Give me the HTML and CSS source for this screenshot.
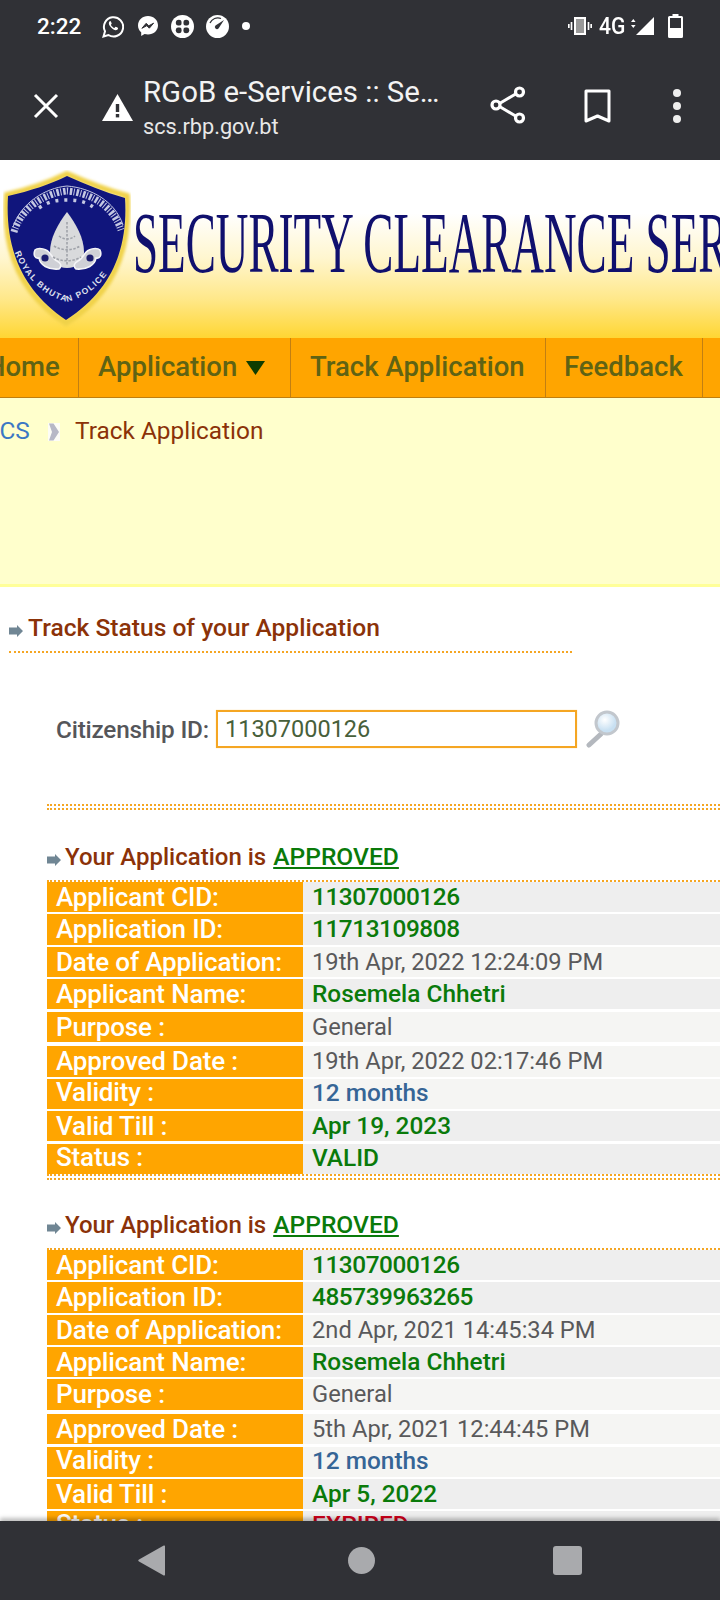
FILE: index.html
```html
<!DOCTYPE html>
<html lang="en">
<head>
<meta charset="utf-8">
<title>RGoB e-Services</title>
<link rel="stylesheet" href="styles.css">
</head>
<body>
<div class="phone">
  <header class="chrome">
    <div class="status">
      <span class="time">2:22</span>
      <svg class="ic wa" width="22" height="23" viewBox="0 0 22 23"><path d="M1.5 21.5l1.5-5.2A9.6 9.6 0 1 1 6.4 20z" fill="none" stroke="#fff" stroke-width="2"/><path d="M7.7 6.2c-1.2 1-1.2 2.800.2 4.900 1.500 2.300 3.500 3.900 5.700 4.100 1.200.1 2.400-.8 2.500-2 0-.3-2.200-1.500-2.500-1.400-.4.200-.8 1-1.200 1.100-.8.100-3.200-2-3.400-3-.1-.4.700-.9.700-1.300 0-.4-.9-2.500-1.300-2.600z" fill="#fff"/></svg>
      <svg class="ic ms" width="20" height="20" viewBox="0 0 20 20"><path d="M10 0C4.400 0 0 4 0 9.400c0 2.800 1.200 5.200 3.200 6.900V20l3.400-1.900c1.100.3 2.200.5 3.400.5 5.600 0 10-4 10-9.300C20 4 15.600 0 10 0z" fill="#fff"/><path d="M3.900 12.300l4.300-5 2.500 2.500 4.900-2.600-4.300 5-2.500-2.500z" fill="#303136" stroke="#303136"/></svg>
      <svg class="ic cl" width="23" height="23" viewBox="0 0 23 23"><circle cx="11.500" cy="11.500" r="11.500" fill="#fff"/><g fill="#303136"><ellipse cx="7.800" cy="7.800" rx="3" ry="3"/><ellipse cx="15.200" cy="7.800" rx="3" ry="3"/><ellipse cx="7.800" cy="15.200" rx="3" ry="3"/><ellipse cx="15.200" cy="15.200" rx="3" ry="3"/></g><path d="M11.500 4v15M4 11.500h15" stroke="#fff" stroke-width="1.600"/></svg>
      <svg class="ic ga" width="23" height="23" viewBox="0 0 23 23"><circle cx="11.500" cy="11.500" r="11.500" fill="#fff"/><path d="M4 8A8.500 8.500 0 0 1 15 3.500" fill="none" stroke="#303136" stroke-width="1.300"/><path d="M9.500 10.500L18 5l-5.500 8.500a2 2 0 0 1-3-3z" fill="#303136"/></svg>
      <span class="dot"></span>
      <span class="status-gap"></span>
      <svg class="ic vb" width="24" height="18" viewBox="0 0 24 18"><rect x="7" y="1" width="10" height="16" fill="#999" stroke="#fff" stroke-width="2"/><path d="M3.500 5v8M20.500 5v8M0.800 7v4M23.200 7v4" stroke="#fff" stroke-width="1.700"/></svg>
      <span class="net">4G</span>
      <svg class="ic sg" width="24" height="18" viewBox="0 0 24 18"><path d="M0 5l2.300-3 2.300 3zM0 8l2.300 3 2.300-3z" fill="#fff"/><path d="M23 0v18H5z" fill="#fff"/></svg>
      <svg class="ic bt" width="15" height="24" viewBox="0 0 15 24"><path d="M4.500 0h6v2h3a1.500 1.500 0 0 1 1.500 1.500v19A1.500 1.500 0 0 1 13.500 24h-12A1.500 1.500 0 0 1 0 22.500v-19A1.500 1.500 0 0 1 1.500 2h3z" fill="#fff"/><rect x="2" y="4" width="11" height="10" fill="#303136"/></svg>
    </div>
    <div class="toolbar">
      <svg class="ic close" width="26" height="26" viewBox="0 0 26 26"><path d="M2 2l22 22M24 2L2 24" stroke="#fff" stroke-width="3"/></svg>
      <svg class="ic warn" width="31" height="27" viewBox="0 0 31 27"><path d="M15.500 0L31 27H0z" fill="#fff"/><rect x="13.800" y="10" width="3.400" height="8" fill="#303136"/><rect x="13.800" y="20" width="3.400" height="3.400" fill="#303136"/></svg>
      <div class="page-title">
        <div class="t1">RGoB e-Services :: Se…</div>
        <div class="t2">scs.rbp.gov.bt</div>
      </div>
      <svg class="ic share" width="36" height="38" viewBox="0 0 36 38"><path d="M7 19L29 6M7 19l22 13" stroke="#fff" stroke-width="3"/><circle cx="6" cy="19" r="4" fill="#303136" stroke="#fff" stroke-width="3.200"/><circle cx="29.500" cy="6" r="4" fill="#303136" stroke="#fff" stroke-width="3.200"/><circle cx="29.500" cy="32" r="4" fill="#303136" stroke="#fff" stroke-width="3.200"/></svg>
      <svg class="ic mark" width="27" height="35" viewBox="0 0 27 35"><path d="M2 2h23v30L13.500 27 2 32z" fill="none" stroke="#fff" stroke-width="3" stroke-linejoin="round"/></svg>
      <div class="more"><span></span><span></span><span></span></div>
    </div>
  </header>

  <main class="page">
    <div class="banner">
      <svg class="crest" width="128" height="158" viewBox="0 0 128 158">
        <defs>
          <path id="arcBottom" d="M10 78C20 106 40 126 64 132C88 126 108 106 118 78"/>
          <filter id="soft" x="-10%" y="-10%" width="120%" height="120%"><feGaussianBlur stdDeviation="0.600"/></filter>
          <filter id="softer" x="-10%" y="-10%" width="120%" height="120%"><feGaussianBlur stdDeviation="1.600"/></filter>
        </defs>
        <path d="M4 25C26 20 48 12 64 4C82 12 102 20 124 26C127 76 113 122 63 153C15 122 0 76 4 25z" fill="none" stroke="#f0d24a" stroke-width="6" filter="url(#softer)"/>
        <path d="M5 26C27 21 48 14 64 6C82 14 101 22 122 28C125 76 111 119 63 150C17 119 2 76 5 26z" fill="#10157c"/>
        <g filter="url(#soft)" fill="none" stroke="#c4c8e2">
          <path d="M11 62C18 38 42 23 64 21C88 23 110 36 118 60" stroke-width="7" stroke-dasharray="2.500 1.400 1 1.800"/>
          <path d="M10 57C18 33 42 18 64 16C88 18 112 31 120 55" stroke-width="1"/>
          <path d="M36 38C46 31 54 30 64 30C74 30 84 31 94 40" stroke-width="3.500" stroke-dasharray="3 6"/>
        </g>
        <g filter="url(#soft)">
          <path d="M64 42C73 54 81 68 81 82C81 92 73 98 64 98C55 98 47 92 47 82C47 68 55 54 64 42z" fill="#d9dadc"/>
          <path d="M32 80c-2 5 0 9 4 8 1 7 9 12 20 11 3-3 2-6-2-8-5-2-6-9-11-11-4-2-9-2-11 0zM97 80c2 5 0 9-4 8-1 7-9 12-20 11-3-3-2-6 2-8 5-2 6-9 11-11 4-2 9-2 11 0z" fill="#cfd0d6" stroke="#f4f4f7" stroke-width="1.600"/>
          <circle cx="42" cy="88" r="3.600" fill="#1a1f6e"/><circle cx="87" cy="88" r="3.600" fill="#1a1f6e"/>
          <path d="M64 52v44M56 66c5 4 11 4 16 0M51 76c8 5 18 5 26 0M50 87c8 5 20 5 28 0" fill="none" stroke="#a0a3aa" stroke-width="1.600" stroke-dasharray="2.500 1.500"/>
        </g>
        <text class="crest-text"><textPath href="#arcBottom" startOffset="3%">ROYAL BHUTAN POLICE</textPath></text>
      </svg>
      <div class="brand"><span class="brand-text">SECURITY CLEARANCE SER</span></div>
    </div>

    <nav class="menu">
      <a class="menu-item home"><span class="home-text">Home</span></a>
      <a class="menu-item app">Application <svg class="caret" width="19" height="14" viewBox="0 0 19 14"><path d="M0 0h19L9.500 14z" fill="#0f3d00"/></svg></a>
      <a class="menu-item track">Track Application</a>
      <a class="menu-item fb">Feedback</a>
      <span class="menu-rest"></span>
    </nav>

    <div class="crumbs">
      <a class="crumb-root"><span class="crumb-clip">SCS</span></a>
      <svg class="crumb-sep" width="12" height="18" viewBox="0 0 12 18"><rect width="12" height="18" fill="#fdfdf6"/><path d="M1 0.500h4.500l5.500 8.500-5.500 8.500H1l3-8.500z" fill="#b7b8c6"/></svg>
      <span class="crumb-now">Track Application</span>
    </div>

    <section class="content">
      <h2 class="sec-head">
        <svg class="bullet" width="14" height="12" viewBox="0 0 14 12"><path d="M0 2.500h8V0l6 6-6 6V9.500H0z" fill="#708694"/></svg>
        <span>Track Status of your Application</span>
      </h2>
      <div class="sec-rule"></div>

      <form class="search">
        <label class="search-label">Citizenship ID:</label>
        <div class="search-input">11307000126</div>
        <svg class="lens" width="36" height="38" viewBox="0 0 36 38"><defs><radialGradient id="glass" cx="40%" cy="35%"><stop offset="0" stop-color="#fff"/><stop offset="1" stop-color="#c8e0f2"/></radialGradient></defs><path d="M15 24L3 35" stroke="#b4b8be" stroke-width="5" stroke-linecap="round"/><circle cx="21" cy="13" r="11" fill="url(#glass)" stroke="#c2c7cd" stroke-width="3"/></svg>
      </form>

      <div class="results">
        <div class="double-rule"></div>

        <h3 class="app-head">
          <svg class="bullet" width="14" height="12" viewBox="0 0 14 12"><path d="M0 2.500h8V0l6 6-6 6V9.500H0z" fill="#708694"/></svg>
          <span>Your Application is <a class="approved">APPROVED</a></span>
        </h3>
        <div class="record">
          <div class="row a"><div class="k">Applicant CID:</div><div class="v green num">11307000126</div></div>
          <div class="row a"><div class="k">Application ID:</div><div class="v green num">11713109808</div></div>
          <div class="row b"><div class="k">Date of Application:</div><div class="v plain">19th Apr, 2022 12:24:09 PM</div></div>
          <div class="row a"><div class="k">Applicant Name:</div><div class="v green">Rosemela Chhetri</div></div>
          <div class="row b tall"><div class="k">Purpose :</div><div class="v plain">General</div></div>
          <div class="row b"><div class="k">Approved Date :</div><div class="v plain">19th Apr, 2022 02:17:46 PM</div></div>
          <div class="row b up"><div class="k">Validity :</div><div class="v blue">12 months</div></div>
          <div class="row a"><div class="k">Valid Till :</div><div class="v green">Apr 19, 2023</div></div>
          <div class="row a last up"><div class="k">Status :</div><div class="v green">VALID</div></div>
        </div>
        <div class="double-rule end"></div>

        <h3 class="app-head second">
          <svg class="bullet" width="14" height="12" viewBox="0 0 14 12"><path d="M0 2.500h8V0l6 6-6 6V9.500H0z" fill="#708694"/></svg>
          <span>Your Application is <a class="approved">APPROVED</a></span>
        </h3>
        <div class="record">
          <div class="row a"><div class="k">Applicant CID:</div><div class="v green num">11307000126</div></div>
          <div class="row a"><div class="k">Application ID:</div><div class="v green num">485739963265</div></div>
          <div class="row b"><div class="k">Date of Application:</div><div class="v plain">2nd Apr, 2021 14:45:34 PM</div></div>
          <div class="row a"><div class="k">Applicant Name:</div><div class="v green">Rosemela Chhetri</div></div>
          <div class="row b tall"><div class="k">Purpose :</div><div class="v plain">General</div></div>
          <div class="row b"><div class="k">Approved Date :</div><div class="v plain">5th Apr, 2021 12:44:45 PM</div></div>
          <div class="row b up"><div class="k">Validity :</div><div class="v blue">12 months</div></div>
          <div class="row a"><div class="k">Valid Till :</div><div class="v green">Apr 5, 2022</div></div>
          <div class="row a last up"><div class="k">Status :</div><div class="v red">EXPIRED</div></div>
        </div>
      </div>
    </section>
  </main>

  <footer class="navbar">
    <svg width="27" height="31" viewBox="0 0 27 31" class="nb back"><path d="M27 1.500v28a1 1 0 0 1-1.700.8L1 16.500a1.200 1.200 0 0 1 0-2L25.300.7a1 1 0 0 1 1.700.8z" fill="#a9aaad"/></svg>
    <span class="nb home-btn"></span>
    <span class="nb square"></span>
  </footer>
</div>
</body>
</html>
```

FILE: styles.css
```css
* { box-sizing: border-box; }
html, body { margin: 0; padding: 0; height: 1600px; overflow: hidden; background: #fff; }
body { font-family: Roboto, "Noto Sans", sans-serif; }
.phone { width: 720px; height: 1600px; display: flex; flex-direction: column; overflow: hidden; }
.ic { display: block; flex: none; }

.chrome { height: 160px; flex: none; background: #303136; color: #fff; }
.status { height: 52px; display: flex; align-items: center; padding-left: 37px; padding-right: 37px; }
.time { font-size: 22.500px; font-weight: 500; width: 44px; margin-right: 21px; white-space: nowrap; }
.wa { margin-right: 14px; }
.ms { margin-right: 13px; }
.cl { margin-right: 12px; }
.ga { margin-right: 13px; }
.dot { width: 8px; height: 8px; border-radius: 50%; background: #fff; }
.status-gap { flex: 1; }
.vb { margin-right: 7px; }
.net { font-size: 24px; font-weight: 500; transform: scaleX(.88); transform-origin: left; width: 27px; margin-right: 5px; }
.sg { margin-right: 13px; }

.toolbar { height: 108px; display: flex; align-items: center; padding-left: 33px; }
.close { margin-right: 43px; }
.warn { margin-right: 10px; margin-top: 2px; }
.page-title { width: 347px; margin-top: 2px; }
.t1 { font-size: 29.400px; line-height: 38px; white-space: nowrap; color: #f3f3f3; }
.t2 { font-size: 21.700px; line-height: 31px; color: #e8e8e8; }
.share { margin-right: 58px; margin-top: -3px; }
.mark { margin-right: 62px; }
.more { display: flex; flex-direction: column; gap: 5px; }
.more span { width: 8px; height: 8px; border-radius: 50%; background: #eee; }

.page { flex: 1; min-height: 0; overflow: hidden; position: relative; }

.banner { height: 178px; display: flex; align-items: flex-start; overflow: hidden;
  background: linear-gradient(to bottom, #fff 0%, #fff 30%, #fff6cf 55%, #ffe88a 78%, #ffd633 100%); }
.crest { flex: none; margin: 10px 0 0 3px; }
.crest-text { font-family: "Liberation Sans", sans-serif; font-size: 8.500px; font-weight: 700; letter-spacing: 1.300px; fill: #dfe1ee; }
.brand { margin-left: 2px; height: 178px; white-space: nowrap; display: flex; align-items: flex-start; }
.brand-text { display: block; font-family: "Liberation Serif", serif; font-size: 86px; line-height: 86px; margin-top: 40px;
  color: #10106e; transform: scaleX(.525); transform-origin: left top; filter: blur(.4px); }

.menu { height: 60px; display: flex; background: #ffa500; border-bottom: 1px solid #bf7e10; overflow: hidden; }
.menu-item { display: flex; align-items: center; padding-bottom: 3px; font-size: 27.500px; font-weight: 500; color: #5f6314; border-right: 1px solid #c27f12; white-space: nowrap; flex: none; }
.home { width: 79px; overflow: hidden; }
.home-text { margin-left: -14px; }
.app { width: 212px; padding-left: 19px; gap: 9px; }
.caret { margin-top: 3px; }
.track { width: 255px; padding-left: 19px; }
.fb { width: 157px; padding-left: 18px; }

.crumbs { height: 189px; background: #ffffcc; border-bottom: 3px solid #ffff99; display: flex; align-items: flex-start; padding-top: 19px; font-size: 24.400px; line-height: 28px; }
.crumb-root { width: 34px; overflow: hidden; color: #3b78c4; white-space: nowrap; }
.crumb-clip { display: block; margin-left: -15px; }
.crumb-sep { margin: 6px 0 0 14px; }
.crumb-now { color: #8b3208; margin-left: 15px; }

.content { padding-top: 25px; }
.sec-head { margin: 0 0 0 9px; font-size: 24.600px; line-height: 32px; font-weight: 500; color: #8b3208; display: flex; align-items: center; gap: 5px; }
.sec-head .bullet { margin-top: 5px; }
.sec-rule { margin: 7px 0 0 9px; width: 563px; border-top: 2px dotted #f5a623; }

.search { display: flex; align-items: center; height: 38px; margin-top: 57px; padding-left: 56px; }
.search-label { font-size: 24.300px; font-weight: 500; color: #55565a; width: 160px; flex: none; white-space: nowrap; letter-spacing: -.2px; }
.search-input { width: 361px; height: 38px; border: 2px solid #f5a623; box-shadow: 0 0 1px #ffd58a; padding-left: 7px; font-size: 23.500px; line-height: 34px; color: #47603a; }
.lens { margin-left: 9px; }

.results { margin: 56px 0 0 47px; }
.double-rule { height: 6px; border-top: 2px dotted #f5a623; border-bottom: 2px dotted #f5a623; }
.app-head { margin: 31px 0 7px; font-size: 24px; line-height: 32px; font-weight: 500; color: #8b3208; display: flex; align-items: center; gap: 4px; white-space: nowrap; }
.app-head .bullet { margin-top: 6px; }
.app-head.second { margin-top: 29px; }
.approved { color: #0a7a0a; text-decoration: underline; font-size: 24.600px; margin-left: 1px; }

.record { border-top: 2px dotted #f5a623; display: flex; flex-direction: column; }
.row { display: flex; height: 30.300px; margin-bottom: 2.100px; }
.row.tall { margin-bottom: 4.500px; }
.row.last { margin-bottom: 0; }
.k { width: 256px; flex: none; background: #ffa500; color: #fff; font-size: 26px; font-weight: 500; line-height: 30px; padding-left: 9px; white-space: nowrap; letter-spacing: -.15px; }
.v { flex: 1; padding-left: 9px; font-size: 24.400px; line-height: 30px; white-space: nowrap; }
.row.up .k, .row.up .v { line-height: 27px; }
.row.a .v { background: #eeeeee; }
.row.b .v { background: #f5f5f3; }
.green { color: #0a7a0a; font-weight: 500; }
.num { letter-spacing: -.45px; }
.blue { color: #366596; font-weight: 500; }
.red { color: #d0021b; font-weight: 500; }
.plain { color: #59595b; font-size: 23.700px; }

.navbar { height: 79px; flex: none; background: #303136; display: flex; align-items: center; position: relative; box-shadow: 0 -3px 4px rgba(0,0,0,.25); padding-left: 138px; }
.nb { display: block; flex: none; }
.back { margin-right: 183px; }
.home-btn { width: 27px; height: 27px; border-radius: 50%; background: #a9aaad; margin-right: 178px; }
.square { width: 29px; height: 29px; border-radius: 3px; background: #a9aaad; }
```
